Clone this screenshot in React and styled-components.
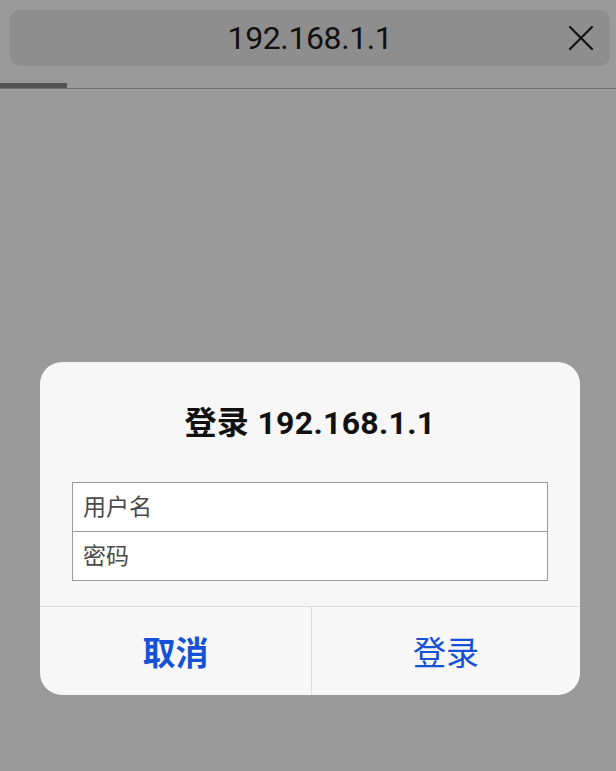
import styled, { createGlobalStyle } from 'styled-components'

const Global = createGlobalStyle`
  html, body {
    margin: 0;
    padding: 0;
    background: #9a9a9a;
  }
  body {
    font-family: Roboto, "Noto Sans CJK SC", sans-serif;
  }
`

const Screen = styled.div`
  width: 616px;
  height: 771px;
  background: #9a9a9a;
  display: flex;
  flex-direction: column;
  overflow: hidden;
`

const TopArea = styled.div`
  padding: 10px 6px 0 10px;
`

const AddressBar = styled.div`
  height: 56px;
  border-radius: 10px;
  background: #8e8e8e;
  position: relative;
  display: flex;
  align-items: center;
  justify-content: center;
`

const Host = styled.span`
  font-size: 32px;
  color: #111;
  letter-spacing: -0.4px;
`

const CloseButton = styled.button`
  position: absolute;
  right: 14px;
  top: 50%;
  transform: translateY(-50%);
  width: 30px;
  height: 30px;
  border: none;
  background: none;
  padding: 0;
  display: flex;
  align-items: center;
  justify-content: center;
`

const Progress = styled.div`
  margin-top: 17px;
  height: 5px;
  border-bottom: 1px solid #6f6f6f;
  display: flex;
  align-items: flex-start;
`

const ProgressFill = styled.div`
  height: 5px;
  background: #545454;
`

const Middle = styled.div`
  flex: 1;
  display: flex;
  padding: 273px 0 0 40px;
`

const Dialog = styled.div`
  width: 540px;
  height: 333px;
  background: #f7f7f7;
  border-radius: 22px;
  display: flex;
  flex-direction: column;
  overflow: hidden;
`

const Title = styled.h2`
  margin: 0;
  padding-top: 40px;
  height: 42px;
  text-align: center;
  font-size: 32px;
  font-weight: 700;
  color: #111;
  line-height: 42px;
  letter-spacing: 0.3px;
`

const Fields = styled.div`
  margin: 38px 32px 0;
  display: flex;
  flex-direction: column;
`

const Field = styled.input`
  box-sizing: border-box;
  height: 50px;
  margin: 0;
  margin-top: ${p => (p.$first ? '0' : '-1px')};
  border: 1px solid #9c9c9c;
  background: #fff;
  padding: 0 10px;
  font-family: Roboto, "Noto Sans CJK SC", sans-serif;
  font-size: 23px;
  outline: none;
  &::placeholder {
    color: #4a4a4a;
  }
`

const Actions = styled.div`
  margin-top: auto;
  height: 88px;
  border-top: 1px solid #dcdcdc;
  display: grid;
  grid-template-columns: 271px 1fr;
`

const Action = styled.button`
  border: none;
  background: none;
  font-family: Roboto, "Noto Sans CJK SC", sans-serif;
  font-size: 33px;
  font-weight: ${p => (p.$bold ? 700 : 400)};
  color: #1652d6;
  border-left: ${p => (p.$divider ? '1px solid #dcdcdc' : 'none')};
  padding: 0;
`

export default function App() {
  return (
    <Screen>
      <Global />
      <TopArea>
        <AddressBar>
          <Host>192.168.1.1</Host>
          <CloseButton aria-label='关闭'>
            <svg width='26' height='26' viewBox='0 0 26 26'>
              <path d='M2 2 L24 24 M24 2 L2 24' stroke='#111' strokeWidth='2.2' strokeLinecap='round' />
            </svg>
          </CloseButton>
        </AddressBar>
      </TopArea>
      <Progress>
        <ProgressFill style={{ width: '67px' }} />
      </Progress>
      <Middle>
        <Dialog>
          <Title>登录 192.168.1.1</Title>
          <Fields>
            <Field $first placeholder='用户名' />
            <Field type='password' placeholder='密码' />
          </Fields>
          <Actions>
            <Action $bold>取消</Action>
            <Action $divider>登录</Action>
          </Actions>
        </Dialog>
      </Middle>
    </Screen>
  )
}
